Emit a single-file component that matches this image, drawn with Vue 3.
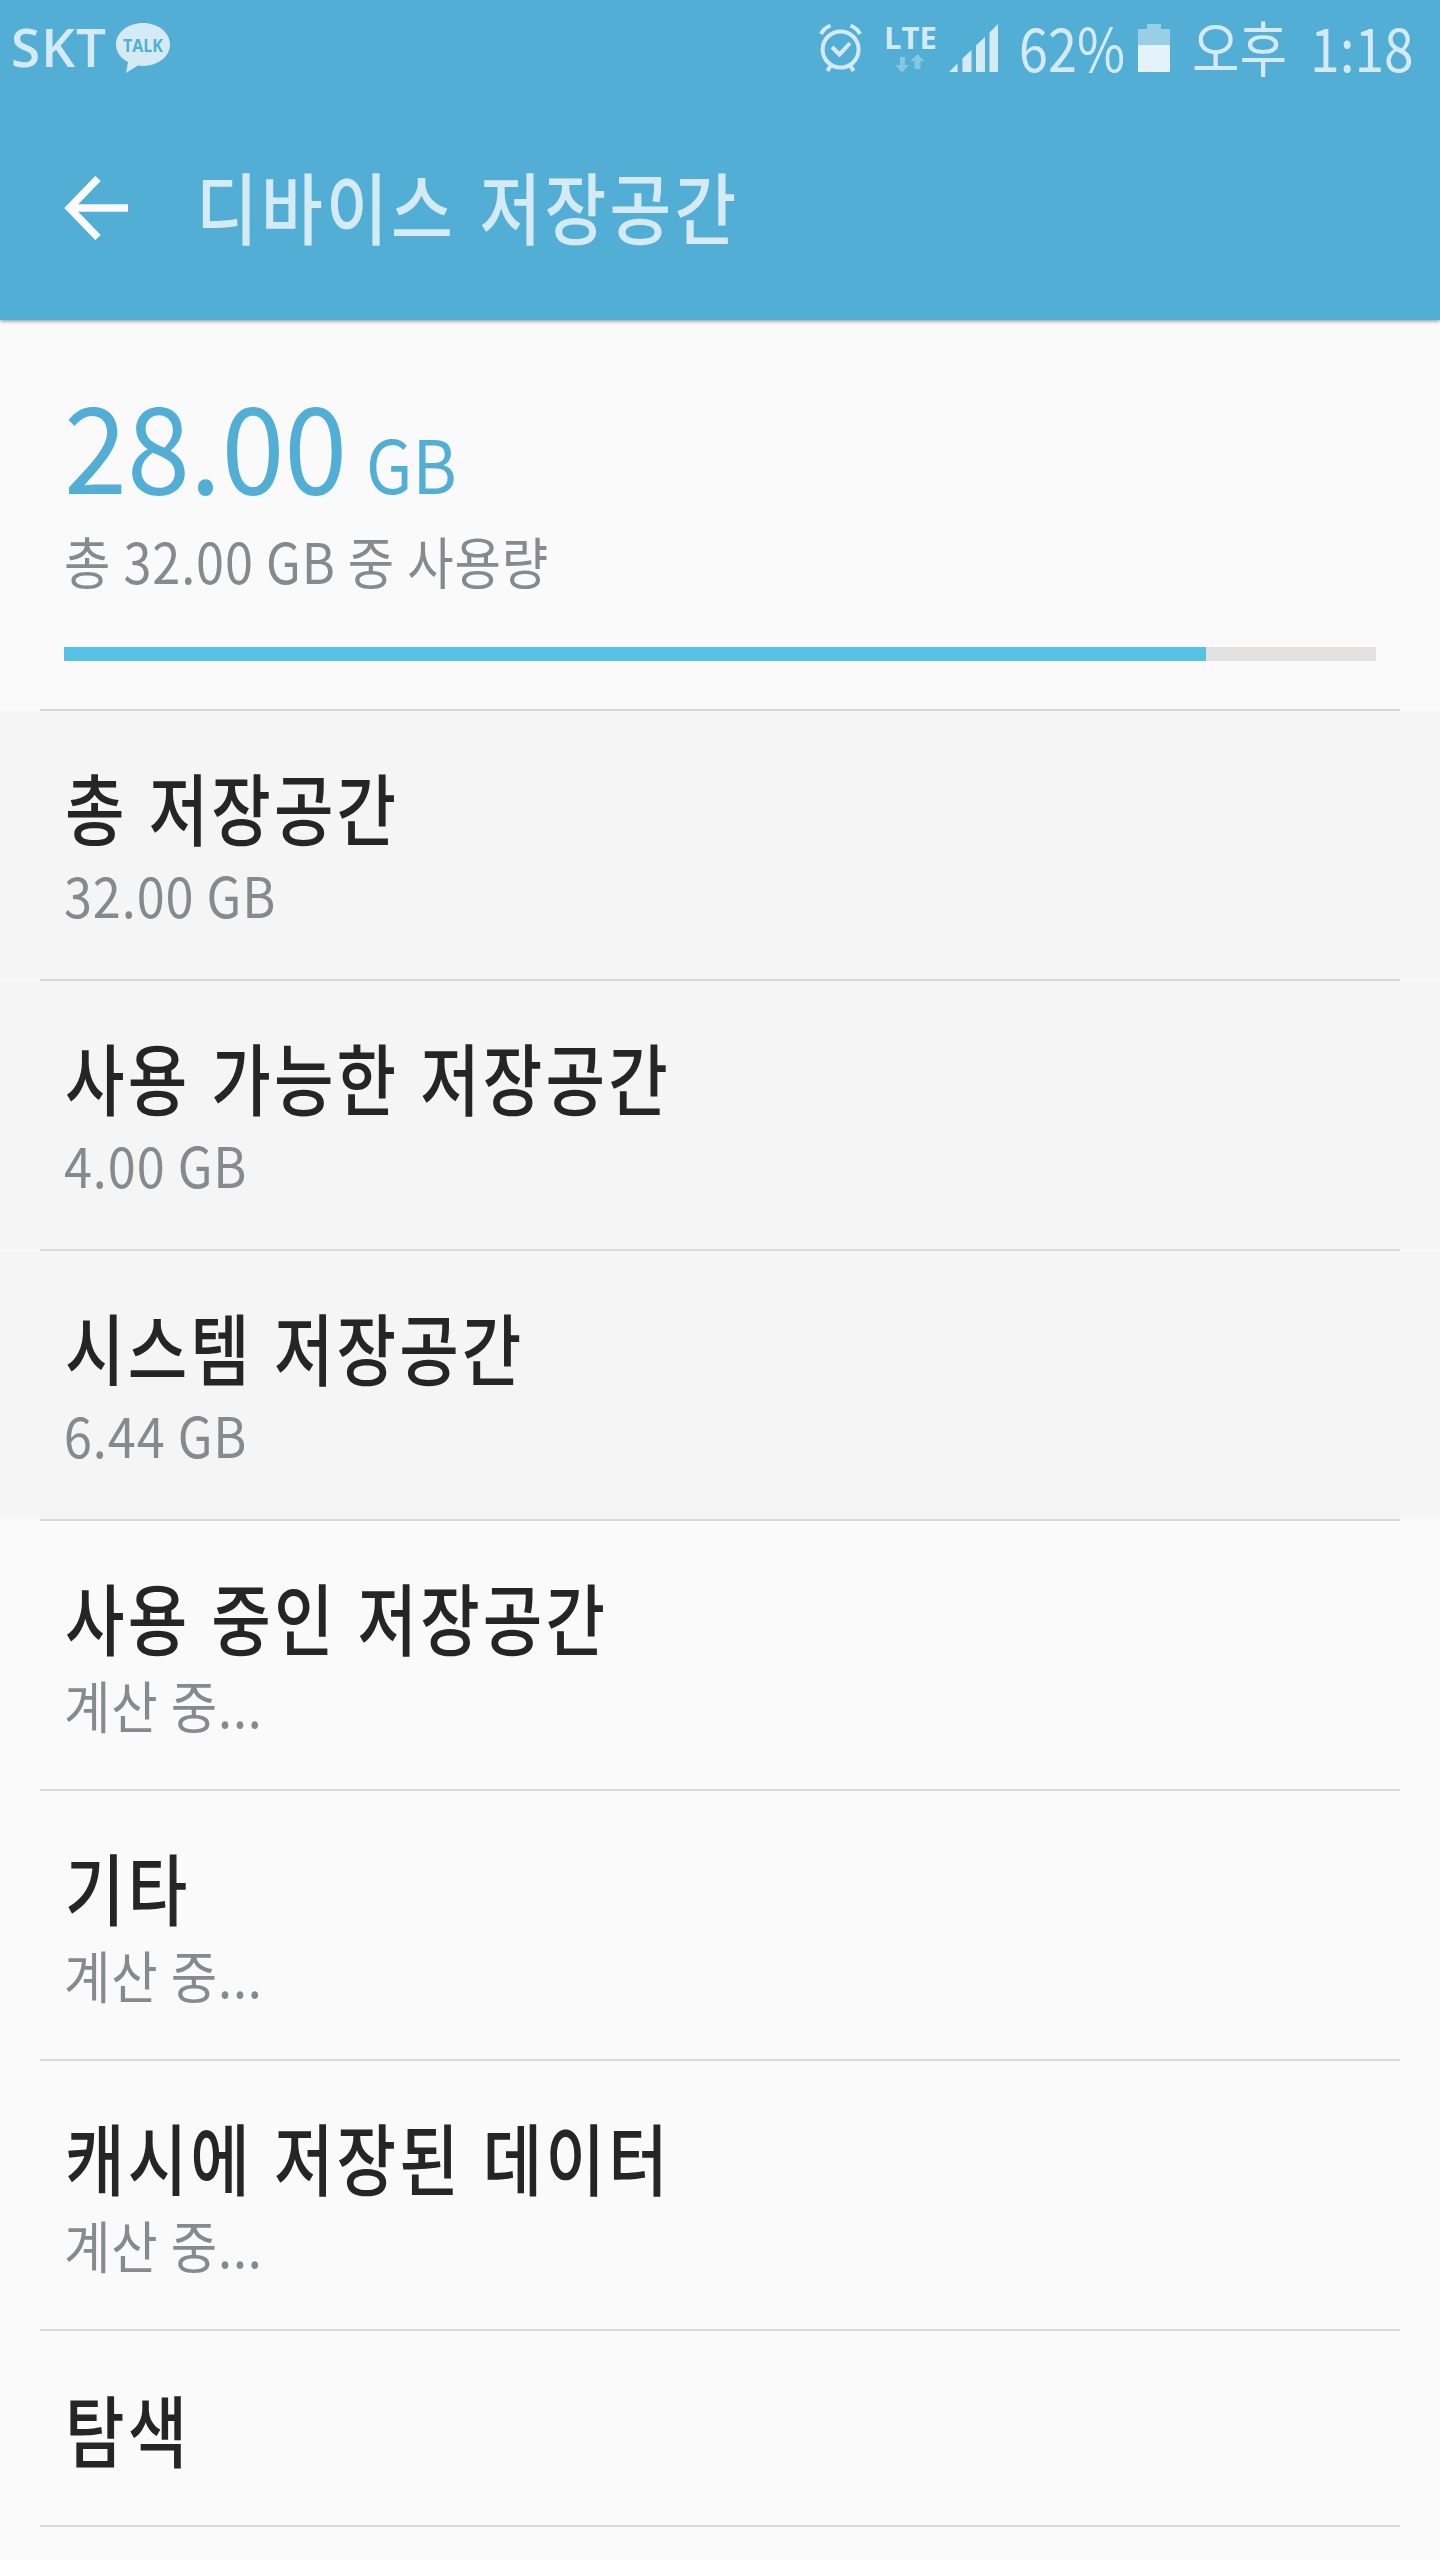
<template>
  <div class="screen">
    <header class="top">
      <div class="status-bar">
        <span class="carrier">SKT</span>
        <svg class="talk" width="56" height="54" viewBox="0 0 56 54">
          <path d="M28 1C13 1 1 10.500 1 22.500c0 7.500 4.500 13.500 12 17.500L11 51l12-7.500c2 .3 3 .4 5 .4 15 0 27-9.400 27-21.400S43 1 28 1z" fill="#d4ebf5" />
          <text x="8" y="29.500" textLength="40" lengthAdjust="spacingAndGlyphs">TALK</text>
        </svg>
        <div class="spacer"></div>
        <svg class="alarm" width="44" height="50" viewBox="0 0 44 50">
          <g fill="none" stroke="#d4ebf5" stroke-width="4">
            <circle cx="21.600" cy="26.500" r="18" />
            <path d="M2 11Q5 5 11.500 2.500M41 11Q38 5 31.500 2.500M12 42l-3.500 6M31 42l3.500 6" />
            <path d="M13 24l7.500 7.500L31 20" />
          </g>
        </svg>
        <div class="lte">
          <span class="lte-label">LTE</span>
          <svg width="30" height="18" viewBox="0 0 30 18">
            <path d="M5 3h5v8h4l-7 7.500L0 11h5zM19.500 15v-8h-4L22.500 0l7 7h-4v8z" fill="#86c6e1" />
          </svg>
        </div>
        <svg class="signal" width="50" height="50" viewBox="0 0 50 50">
          <path d="M0 49L8.500 40.500V49zM13.500 49V35.500L22.500 27V49zM27 49V22.500L36 14V49zM40.500 49V9.500L49 1V49z" fill="#d4ebf5" />
        </svg>
        <span class="percent">62%</span>
        <svg class="battery" width="32" height="48" viewBox="0 0 32 48">
          <path d="M9 0h14v5h9v16H0V5h9z" fill="#98cfe5" />
          <path d="M0 21h32v27H0z" fill="#e4f3f9" />
        </svg>
        <span class="ampm">오후</span>
        <span class="clock">1:18</span>
      </div>
      <div class="app-bar">
        <svg class="back" width="66" height="64" viewBox="0 0 66 64">
          <path d="M35 2.500L6.500 32l28.500 29.500M5 32h60" fill="none" stroke="#fafafa" stroke-width="7.500" />
        </svg>
        <h1 class="title">디바이스 저장공간</h1>
      </div>
    </header>

    <section class="summary">
      <div class="used"><span class="number">28.00</span><span class="unit">GB</span></div>
      <div class="detail">총 32.00 GB 중 사용량</div>
      <div class="track">
        <div class="fill" :style="{ width: usedPercent + '%' }"></div>
      </div>
    </section>

    <ul class="list">
      <li v-for="row in rows" :key="row.name" :class="['row', { shaded: row.shaded, single: !row.value }]">
        <div class="name">{{ row.name }}</div>
        <div v-if="row.value" class="value">{{ row.value }}</div>
      </li>
    </ul>
  </div>
</template>

<script setup>
import { ref } from "vue";

const usedPercent = ref(87.04);

const rows = ref([
  { name: "총 저장공간", value: "32.00 GB", shaded: true },
  { name: "사용 가능한 저장공간", value: "4.00 GB", shaded: true },
  { name: "시스템 저장공간", value: "6.44 GB", shaded: true },
  { name: "사용 중인 저장공간", value: "계산 중..." },
  { name: "기타", value: "계산 중..." },
  { name: "캐시에 저장된 데이터", value: "계산 중..." },
  { name: "탐색" },
]);
</script>

<style>
body {
  background: #fafafa;
}
</style>

<style scoped>
.screen {
  width: 1440px;
  height: 2560px;
  overflow: hidden;
  background: #fafafa;
  font-family: "Noto Sans CJK KR", sans-serif;
  white-space: nowrap;
}

/* Header */
.top {
  height: 320px;
  background: #53aed5;
  color: #d4ebf5;
  box-shadow: 0 1px 4px rgba(0, 0, 0, 0.45);
}

.status-bar {
  display: flex;
  height: 96px;
  align-items: flex-start;
}

.spacer {
  flex: 1;
}

.carrier {
  width: 93px;
  margin-left: 11px;
  font: 600 53px/93px "Open Sans", sans-serif;
  letter-spacing: 1px;
}

.talk {
  margin: 22px 0 0 11px;
}

.talk text {
  font: 700 18px "Open Sans", sans-serif;
  fill: #53aed5;
}

.alarm {
  margin-top: 23px;
}

.lte {
  width: 52px;
  margin: 20px 0 0 21px;
}

.lte-label {
  display: block;
  font: 700 31px/34px "Open Sans", sans-serif;
}

.lte svg {
  display: block;
  margin-left: 11px;
}

.signal {
  margin: 23px 0 0 13px;
}

.percent,
.ampm,
.clock {
  font-size: 60px;
  line-height: 92px;
  font-weight: 400;
  transform-origin: left;
}

.percent {
  width: 104px;
  margin-left: 20px;
  transform: scaleX(0.87);
}

.battery {
  margin: 24px 0 0 15px;
}

.ampm {
  width: 92px;
  margin-left: 22px;
  transform: scaleX(0.86);
}

.clock {
  width: 100px;
  margin: 0 30px 0 26px;
  transform: scaleX(0.89);
}

.app-bar {
  display: flex;
  height: 224px;
}

.back {
  margin: 80px 0 0 63px;
}

.title {
  margin: 54px 0 0 67px;
  font-size: 78px;
  line-height: 110px;
  font-weight: 500;
  letter-spacing: 3.8px;
  word-spacing: 6px;
  transform: scaleX(0.86);
  transform-origin: left;
}

/* Used space */
.summary {
  height: 389px;
  padding: 62px 64px 0;
  box-sizing: border-box;
  color: #878a8c;
}

.used {
  display: flex;
  height: 143px;
  align-items: baseline;
  line-height: 120px;
  color: #53aed5;
}

.number {
  width: 302px;
  font-size: 120px;
  transform: scaleX(0.945);
  transform-origin: left;
}

.unit {
  font-size: 74px;
  transform: scaleX(0.91);
  transform-origin: left;
}

.detail,
.value {
  font-size: 56px;
  line-height: 70px;
  letter-spacing: 1px;
  transform: scaleX(0.9);
  transform-origin: left;
}

.track {
  height: 14px;
  margin-top: 52px;
  background: #e2e1df;
}

.fill {
  height: 14px;
  background: #57c0e5;
}

/* Rows */
.list {
  margin: 0;
  padding: 0;
  list-style: none;
}

.row {
  height: 270px;
  padding: 42px 64px 0;
  box-sizing: border-box;
  background: linear-gradient(#d9d9d9, #d9d9d9) 40px 0 / 1360px 2px no-repeat;
}

.row.shaded {
  background: linear-gradient(#d9d9d9, #d9d9d9) 40px 0 / 1360px 2px no-repeat,
    linear-gradient(transparent 2px, #f5f5f5 2px);
}

.row.single {
  height: 196px;
  padding-top: 44px;
}

.list::after {
  content: "";
  display: block;
  height: 2px;
  margin: 0 40px;
  background: #d9d9d9;
}

.name {
  height: 108px;
  margin-left: 1px;
  font-size: 78px;
  line-height: 110px;
  font-weight: 500;
  letter-spacing: 3.8px;
  word-spacing: 4px;
  color: #252525;
  transform: scaleX(0.829);
  transform-origin: left;
}

.value {
  color: #878a8c;
}
</style>
